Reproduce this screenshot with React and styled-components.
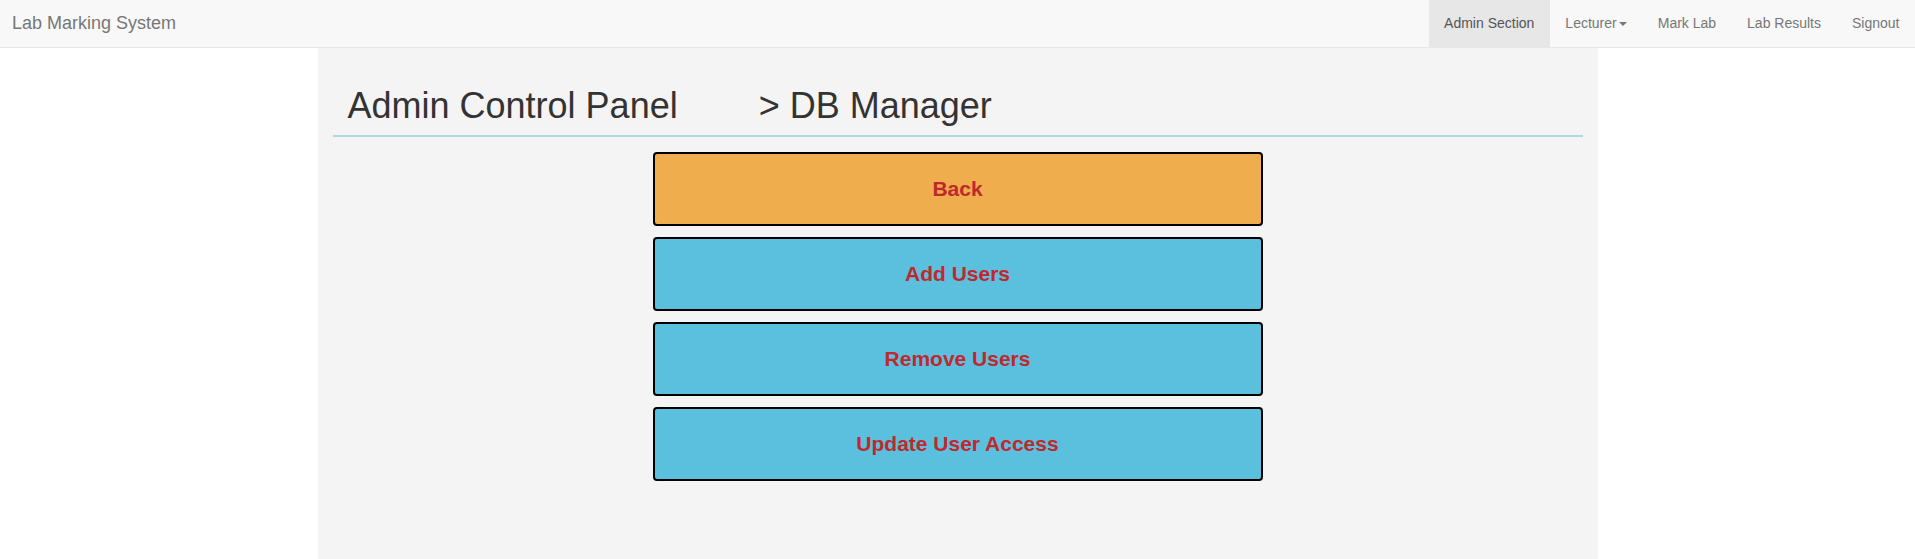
import styled, { createGlobalStyle } from "styled-components";

const GlobalStyle = createGlobalStyle`
    html, body {
        margin: 0;
        padding: 0;
        background: #ffffff;
        font-family: "Liberation Sans", Arial, Helvetica, sans-serif;
        font-size: 14px;
        color: #333333;
    }
    * {
        box-sizing: border-box;
    }
`;

const links = [
    { label: "Admin Section", active: true },
    { label: "Lecturer", caret: true },
    { label: "Mark Lab" },
    { label: "Lab Results" },
    { label: "Signout" },
];

const actions = [
    { label: "Back", kind: "warning" },
    { label: "Add Users", kind: "info" },
    { label: "Remove Users", kind: "info" },
    { label: "Update User Access", kind: "info" },
];

export default function App() {
    return (
        <>
            <GlobalStyle />
            <Navbar>
                <Brand>Lab Marking System</Brand>
                <NavList>
                    {links.map((link) => (
                        <NavItem key={link.label} active={link.active}>
                            {link.label}
                            {link.caret && <Caret />}
                        </NavItem>
                    ))}
                </NavList>
            </Navbar>
            <Panel>
                <Header>
                    Admin Control Panel
                    <Crumb>&gt; DB Manager</Crumb>
                </Header>
                <ActionList>
                    {actions.map((action) => (
                        <ActionButton key={action.label} kind={action.kind}>
                            {action.label}
                        </ActionButton>
                    ))}
                </ActionList>
            </Panel>
        </>
    );
}

const Navbar = styled.nav`
    display: flex;
    justify-content: space-between;
    align-items: stretch;
    height: 48px;
    background: #f8f8f8;
    border-bottom: 1px solid #e7e7e7;
`;

const Brand = styled.a`
    padding: 13px 12px;
    font-size: 18px;
    line-height: 20px;
    color: #777777;
`;

const NavList = styled.ul`
    display: flex;
    margin: 0;
    padding: 0;
    list-style: none;
`;

const NavItem = styled.li`
    display: flex;
    align-items: flex-start;
    padding: 13px 15.5px;
    font-size: 14px;
    line-height: 20px;
    color: ${props => props.active ? "#555555" : "#777777"};
    background: ${props => props.active ? "#e7e7e7" : "transparent"};
`;

const Caret = styled.span`
    display: inline-block;
    width: 0;
    height: 0;
    margin-top: 9px;
    margin-left: 2px;
    border-top: 4px solid #777777;
    border-left: 4px solid transparent;
    border-right: 4px solid transparent;
`;

const Panel = styled.main`
    width: 1280px;
    min-height: calc(100vh - 48px);
    margin: 0 auto;
    padding: 38px 15px 40px;
    background: #f4f4f4;
`;

const Header = styled.h1`
    margin: 0;
    padding: 0 15px 9px;
    font-size: 36px;
    font-weight: 400;
    line-height: 40px;
    color: #333333;
    border-bottom: 2px solid #add8e6;
`;

const Crumb = styled.span`
    margin-left: 81px;
`;

const ActionList = styled.div`
    display: flex;
    flex-direction: column;
    align-items: center;
    gap: 11px;
    margin-top: 15px;
`;

const ActionButton = styled.button`
    width: 610px;
    height: 74px;
    border: 2px solid #000000;
    border-radius: 4px;
    background: ${props => props.kind === "warning" ? "#f0ad4e" : "#5bc0de"};
    font-family: "Liberation Sans", Arial, sans-serif;
    font-size: 21px;
    font-weight: 700;
    color: #c0282d;
    cursor: pointer;
`;
